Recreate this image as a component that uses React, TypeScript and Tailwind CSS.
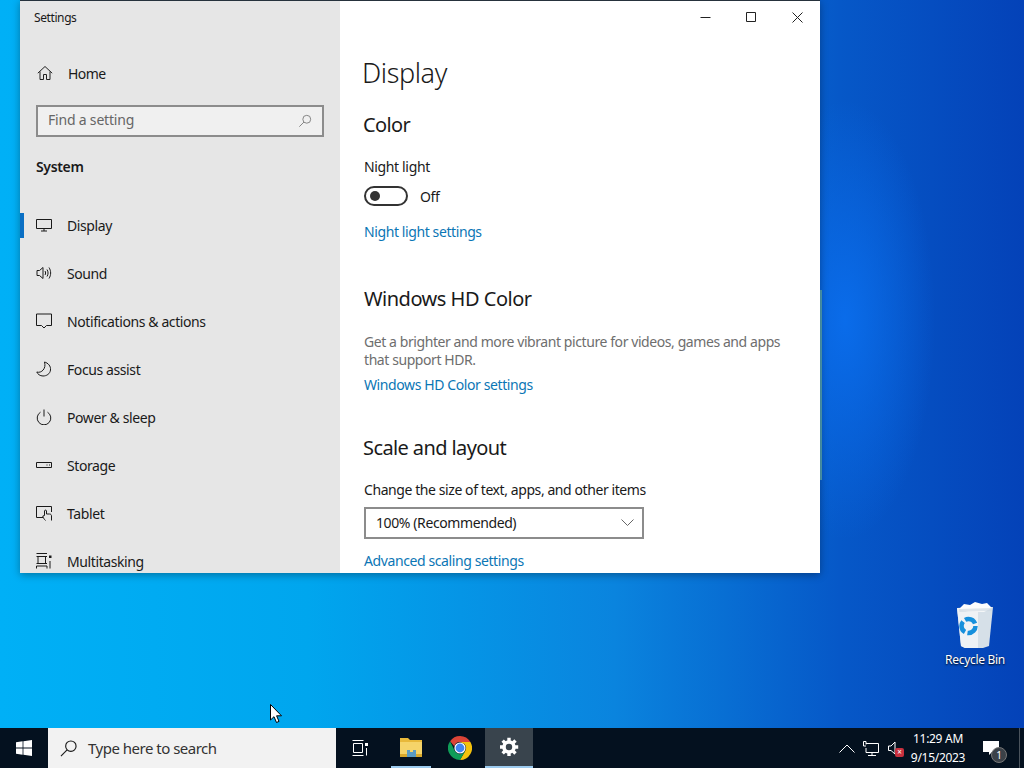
// Windows 10 desktop with Settings open on the Display page

import React from 'react';

type IconProps = { className?: string };

const Ico: React.FC<React.PropsWithChildren<IconProps>> = ({ className, children }) => (
  <svg viewBox="0 0 16 16" fill="none" stroke="currentColor" strokeWidth="1" className={className ?? 'w-4 h-4'}>
    {children}
  </svg>
);

const HomeIcon = () => <Ico><path d="M.8 8.2 8 1.5 15.2 8.2M3 6.5V14.5H6.5V9.5H9.5V14.5H13V6.5" /></Ico>;
const DisplayIcon = () => <Ico><path d="M.5 2.5H15.5V11.5H.5ZM8 11.5V14M5 14H11" /></Ico>;
const SoundIcon = () => <Ico><path d="M1 5.5H3.5L7 2.5V13.5L3.5 10.5H1ZM9 6C9.8 7 9.8 9 9 10M11 4.5C12.4 6.5 12.4 9.5 11 11.5M13 2.5C15.2 6 15.2 10 13 13.5" /></Ico>;
const NotifyIcon = () => <Ico><path d="M.5 1H15.5V12.5H10.5L8 15 5.5 12.5H.5Z" /></Ico>;
const MoonIcon = () => <Ico><path d="M8.5 1C12 2 15 5 14.5 9 14 13 10.5 15 7 15 4 15 1.5 13 .8 11 5.5 12.5 10.5 7.5 8.5 1Z" /></Ico>;
const PowerIcon = () => <Ico><path d="M8 .5V7.5M4.5 3.2A6.8 6.8 0 1 0 11.5 3.2" /></Ico>;
const StorageIcon = () => <Ico><path d="M.5 5.5H15.5V10.5H.5ZM10.5 8H11.5M13 8H14" /></Ico>;
const TabletIcon = () => <Ico><path d="M7 12.5H.5V1.5H15.5V7M9.5 15.5C8 14 7 12.5 6.8 11L8.5 10.5V6C8.5 4.8 10.5 4.8 10.5 6V9H13.5C15 9 15.5 10 15.5 11V15.5" /></Ico>;
const MultitaskIcon = () => <Ico><path d="M.5 .5H11M.5 15.5V13H11V15.5M2 3.5H9.5V10.5H2ZM.5 3.5H11M.5 10.5H11M14 8V15.5" /><rect x="13" y="2.5" width="2.5" height="2.5" fill="currentColor" stroke="none" /></Ico>;

const navItems = [
  { label: 'Display', icon: <DisplayIcon />, active: true },
  { label: 'Sound', icon: <SoundIcon /> },
  { label: 'Notifications & actions', icon: <NotifyIcon /> },
  { label: 'Focus assist', icon: <MoonIcon /> },
  { label: 'Power & sleep', icon: <PowerIcon /> },
  { label: 'Storage', icon: <StorageIcon /> },
  { label: 'Tablet', icon: <TabletIcon /> },
  { label: 'Multitasking', icon: <MultitaskIcon /> },
];

const Sidebar = () => (
  <aside className="w-[320px] shrink-0 bg-[#e6e6e6] text-[#1a1a1a] overflow-hidden">
    <div className="h-[33px] pl-[14px] flex items-center text-[12px] tracking-[-0.4px]">Settings</div>
    <div className="h-[48px] pl-[17px] mt-[15px] flex items-center">
      <span className="text-[#222]"><HomeIcon /></span>
      <span className="ml-[15px] text-[14px] tracking-[-0.6px]">Home</span>
    </div>
    <div className="mx-[16px] mt-[8px] h-[32px] border-2 border-[#8c8c8c] bg-[#f0f0f0] flex items-center justify-between px-[10px]">
      <span className="text-[14px] tracking-[-0.2px] text-[#666] pb-[4px]">Find a setting</span>
      <svg viewBox="0 0 16 16" fill="none" stroke="#777" strokeWidth="1" className="w-[14px] h-[14px]">
        <circle cx="10" cy="6" r="4.5" />
        <path d="M6.8 9.2 1.5 14.5" />
      </svg>
    </div>
    <div className="pl-[16px] mt-[19px] h-[20px] flex items-center text-[14px] font-semibold tracking-[-0.35px]">System</div>
    <nav className="mt-[25px]">
      {navItems.map((item) => (
        <div key={item.label} className="relative h-[48px] flex items-center pl-[16px] shrink-0">
          {item.active && <span className="absolute left-0 top-[12px] w-[4px] h-[25px] bg-[#0a6fc4]" />}
          <span className="w-[16px] flex justify-center">{item.icon}</span>
          <span className="ml-[15px] text-[14px] tracking-[-0.4px]">{item.label}</span>
        </div>
      ))}
    </nav>
  </aside>
);

const WindowControls = () => (
  <div className="flex justify-end h-[33px] text-[#222]">
    {[
      <path key="min" d="M.5 5.5H10.5" />,
      <path key="max" d="M.5.5H9.5V9.5H.5Z" />,
      <path key="close" d="M.5.5 10.5 10.5M10.5.5.5 10.5" />,
    ].map((p, i) => (
      <div key={i} className="w-[46px] flex items-center justify-center">
        <svg viewBox="0 0 11 11" fill="none" stroke="currentColor" strokeWidth="1" className="w-[11px] h-[11px]">{p}</svg>
      </div>
    ))}
  </div>
);

const LinkText: React.FC<React.PropsWithChildren> = ({ children }) => (
  <div className="text-[14px] leading-[20px] tracking-[-0.4px] text-[#0b76b5]">{children}</div>
);

const MainPane = () => (
  <main className="flex-1 bg-white overflow-hidden text-[#1a1a1a]">
    <WindowControls />
    <div className="pl-[24px]">
      <h1 className="-ml-[2px] mt-[17px] h-[44px] leading-[44px] text-[27px] font-light tracking-[-0.4px]">Display</h1>
      <h2 className="-ml-[1px] mt-[16px] h-[28px] leading-[28px] text-[20px] tracking-[-0.6px]">Color</h2>
      <div className="mt-[18px] h-[20px] leading-[20px] text-[14px] tracking-[-0.35px]">Night light</div>
      <div className="mt-[9px] flex items-center h-[20px]">
        <div className="w-[44px] h-[20px] rounded-full border-2 border-[#333] flex items-center pl-[4px]">
          <span className="w-[10px] h-[10px] rounded-full bg-[#333]" />
        </div>
        <span className="ml-[12px] text-[14px] leading-[20px] mt-[2px] tracking-[-0.4px]">Off</span>
      </div>
      <div className="mt-[16px]"><LinkText>Night light settings</LinkText></div>
      <h2 className="mt-[43px] h-[28px] leading-[28px] text-[20px] tracking-[-0.5px]">Windows HD Color</h2>
      <p className="mt-[20px] w-[430px] text-[14px] leading-[18px] tracking-[-0.42px] text-[#6e6e6e]">
        Get a brighter and more vibrant picture for videos, games and apps that support HDR.
      </p>
      <div className="mt-[6px]"><LinkText>Windows HD Color settings</LinkText></div>
      <h2 className="-ml-[1px] mt-[39px] h-[28px] leading-[28px] text-[20px] tracking-[-0.6px]">Scale and layout</h2>
      <div className="mt-[18px] h-[20px] leading-[20px] text-[14px] tracking-[-0.42px]">Change the size of text, apps, and other items</div>
      <div className="mt-[7px] w-[280px] h-[32px] border-2 border-[#8c8c8c] flex items-center justify-between pl-[10px] pr-[8px]">
        <span className="text-[14px] tracking-[-0.4px] pb-[1px]">100% (Recommended)</span>
        <svg viewBox="0 0 13 8" fill="none" stroke="#666" strokeWidth="1" className="w-[13px] h-[8px]">
          <path d="M.5.5 6.5 6.5 12.5.5" />
        </svg>
      </div>
      <div className="mt-[12px]"><LinkText>Advanced scaling settings</LinkText></div>
    </div>
  </main>
);

const WinLogo = () => (
  <svg viewBox="0 0 16 16" fill="#fff" className="w-[16px] h-[16px]">
    <path d="M0 2.2 6.6 1.3V7.5H0ZM7.4 1.2 16 0V7.5H7.4ZM0 8.4H6.6V14.7L0 13.8ZM7.4 8.4H16V16L7.4 14.8Z" />
  </svg>
);

const ExplorerIcon = () => (
  <svg viewBox="0 0 22 20" className="w-[22px] h-[20px]">
    <path d="M0 1H8L10 3H22V6H0Z" fill="#e8b93a" />
    <rect x="0" y="5" width="22" height="15" fill="#f5d469" />
    <rect x="0" y="17" width="22" height="3" fill="#d9a92c" />
    <rect x="7" y="13" width="9" height="7" fill="#5a9bc4" />
    <rect x="10" y="13" width="3" height="2" fill="#f5d469" />
  </svg>
);

const ChromeIcon = () => (
  <svg viewBox="0 0 24 24" className="w-[24px] h-[24px]">
    <path d="M12 0A12 12 0 0 1 22.4 6H12A6 6 0 0 0 6.3 10.2L2.1 5.2A12 12 0 0 1 12 0Z" fill="#db4437" />
    <path d="M22.4 6A12 12 0 0 1 12 24L17.2 15A6 6 0 0 0 16.5 8L12 6Z" fill="#f4c20d" />
    <path d="M12 24A12 12 0 0 1 2.1 5.2L6.8 15A6 6 0 0 0 14 17.7L17.2 15Z" fill="#0f9d58" />
    <circle cx="12" cy="12" r="5.6" fill="#fff" />
    <circle cx="12" cy="12" r="4.4" fill="#4285f4" />
  </svg>
);

const SolidGear = () => (
  <svg viewBox="0 0 20 20" fill="none" stroke="#fff" className="w-[20px] h-[20px]">
    <circle cx="10" cy="10" r="5" strokeWidth="3.6" />
    {[0, 45, 90, 135].map((deg) => (
      <path key={deg} d="M10 .8V19.2" strokeWidth="3.4" strokeDasharray="3.4 11.4" transform={`rotate(${deg} 10 10)`} />
    ))}
  </svg>
);

const Taskbar = () => (
  <div className="h-[40px] shrink-0 bg-[#04111f] flex items-stretch text-white">
    <div className="w-[48px] flex items-center justify-center"><WinLogo /></div>
    <div className="w-[288px] bg-[#f2f2f2] flex items-center pl-[12px]">
      <svg viewBox="0 0 18 18" fill="none" stroke="#1a1a1a" strokeWidth="1.2" className="w-[17px] h-[17px]">
        <circle cx="11.5" cy="6.5" r="5.5" />
        <path d="M7.5 10.5 1 17" />
      </svg>
      <span className="ml-[11px] text-[15px] tracking-[-0.5px] text-[#333]">Type here to search</span>
    </div>
    <div className="w-[48px] flex items-center justify-center">
      <svg viewBox="0 0 16 16" fill="none" stroke="#fff" strokeWidth="1" className="w-[16px] h-[16px]">
        <path d="M.5 .5H11.5M.5 15.5H11.5M1.5 3.5H10.5V12.5H1.5ZM14.5 8V15.5" />
        <rect x="13" y="3" width="3" height="3" fill="#fff" stroke="none" />
      </svg>
    </div>
    <div className="w-[40px] ml-[7px] border-b-2 border-[#9ccbef] flex items-center justify-center"><ExplorerIcon /></div>
    <div className="w-[48px] ml-[5px] flex items-center justify-center"><ChromeIcon /></div>
    <div className="w-[48px] ml-[1px] bg-[#39444d] border-b-2 border-[#9ccbef] flex items-center justify-center"><SolidGear /></div>
    <div className="flex-1 flex items-center justify-end">
      <svg viewBox="0 0 16 9" fill="none" stroke="#fff" strokeWidth="1" className="w-[16px] h-[9px] mr-[8px]">
        <path d="M.5 8.5 8 1 15.5 8.5" />
      </svg>
      <svg viewBox="0 0 16 15" fill="none" stroke="#fff" strokeWidth="1" className="w-[16px] h-[15px] mr-[9px]">
        <path d="M3 3.5V.5H.5V5H3M3 2.5H15.5V11.5H3V7M9 11.5V14.5M5 14.5H13" />
      </svg>
      <div className="relative w-[16px] h-[15px] mr-[3px]">
        <svg viewBox="0 0 16 15" fill="none" stroke="#fff" strokeWidth="1" className="w-[16px] h-[15px]">
          <path d="M.5 5H3L7 1V13L3 9.5H.5Z" />
        </svg>
        <span className="absolute left-[7px] top-[7px] w-[9px] h-[9px] rounded-[2px] bg-[#c8303e] text-[8px] leading-[8px] text-center">×</span>
      </div>
      <div className="w-[62px] flex flex-col items-center text-[12px] leading-[19px] tracking-[-0.3px]">
        <span>11:29 AM</span>
        <span>9/15/2023</span>
      </div>
      <div className="relative w-[44px] h-[40px] ml-[6px] flex items-center justify-center pr-[12px]">
        <svg viewBox="0 0 16 15" fill="#fff" className="w-[16px] h-[15px]">
          <path d="M0 0H16V11H9L6 14V11H0Z" />
        </svg>
        <span className="absolute left-[16px] top-[19px] w-[16px] h-[16px] rounded-full bg-[#3b4148] border border-[#777] text-[10px] leading-[14px] text-center">1</span>
      </div>
      <div className="w-[1px] h-[40px] bg-[#4a535c] mr-[4px]" />
    </div>
  </div>
);

const RecycleBin = () => (
  <div className="absolute left-[936px] top-[602px] w-[78px] flex flex-col items-center">
    <svg viewBox="0 0 38 46" className="w-[38px] h-[46px]">
      <path d="M1 6 37 5 33 44 27 46 9 46 5 44Z" fill="#d6e0e8" />
      <path d="M1 6 22 5.5 22 46 9 46 5 44Z" fill="#eef2f5" />
      <path d="M3 7 8 2 14 3 19 0 26 2 31 1 36 6 28 10 12 10Z" fill="#fdfdfd" />
      <path d="M3 7 36 6 35.5 9 3.5 10Z" fill="#c9d6e0" opacity="0.6" />
      <circle cx="12.5" cy="24" r="7" fill="none" stroke="#1690dc" strokeWidth="4.5" strokeDasharray="12 2.6" />
    </svg>
    <span className="mt-[4px] text-[12px] leading-[16px] tracking-[-0.3px] text-white [text-shadow:0_1px_2px_#000]">Recycle Bin</span>
  </div>
);

const Cursor = () => (
  <svg viewBox="0 0 12 19" className="absolute left-[270px] top-[704px] w-[12px] h-[19px]">
    <path d="M.5.5V16L4 12.7 6.5 18.5 9 17.4 6.6 11.8H11.5Z" fill="#fff" stroke="#000" strokeWidth="1" />
  </svg>
);

export default function App() {
  return (
    <div className="relative w-[1024px] h-[768px] overflow-hidden flex flex-col font-['Noto_Sans',sans-serif]">
      <div className="flex-1 bg-[radial-gradient(ellipse_90px_220px_at_845px_320px,#0a6cea_0,#0a6cea00_100%),linear-gradient(90deg,#00b0f6_0%,#00a6ee_30%,#0a84de_60%,#0658c8_82%,#0442b8_100%)]" />
      <Taskbar />
      <RecycleBin />
      <div className="absolute left-[820px] top-[290px] w-[2px] h-[190px] bg-[#4fa0b8]" />
      <div className="absolute left-[20px] top-0 w-[800px] h-[573px] flex border-t border-[#26323c] shadow-[0_2px_8px_#00000055]">
        <Sidebar />
        <MainPane />
      </div>
      <Cursor />
    </div>
  );
}
